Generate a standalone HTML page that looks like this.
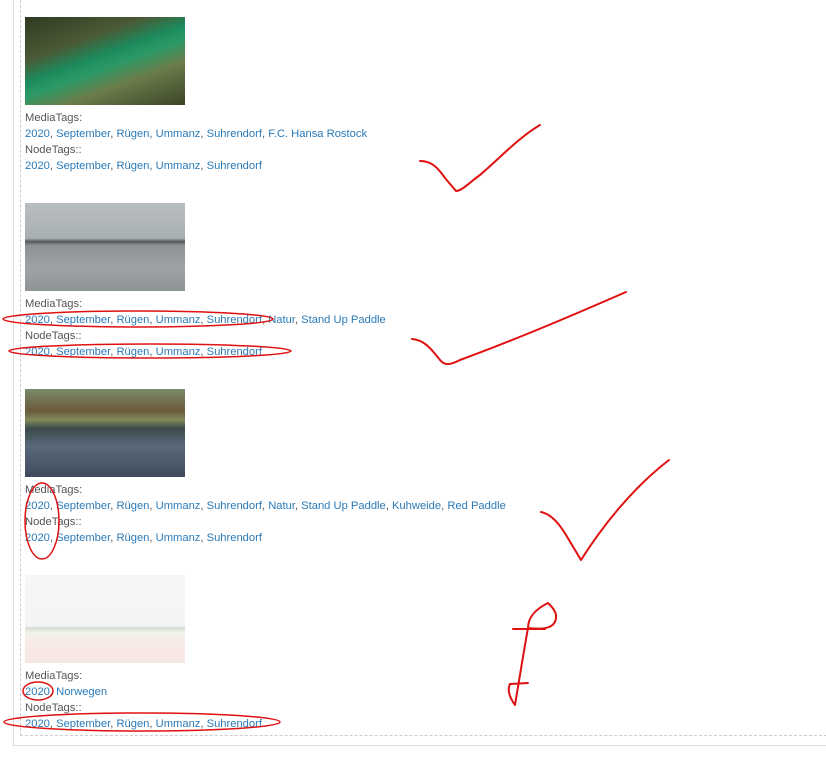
<!DOCTYPE html>
<html><head><meta charset="utf-8"><style>
body{margin:0;width:826px;height:768px;background:#fff;position:relative;overflow:hidden;font-family:"Liberation Sans","DejaVu Sans",sans-serif;font-size:11.2px;}
.outer{position:absolute;left:13px;top:0;width:813px;height:745px;border-left:1px solid #ddd;border-bottom:1px solid #ddd;}
.inner{position:absolute;left:20px;top:0;width:806px;height:735px;border-left:1px dashed #ccc;border-bottom:1px dashed #ccc;}
.blk{position:absolute;left:25px;width:600px;}
.img{width:160px;height:88px;}
.t{line-height:16px;color:#555;white-space:nowrap;}
.t a{color:#2a7ab8;text-decoration:none;}
.l1{margin-top:5px;}
svg{position:absolute;left:0;top:0;}
</style></head><body>
<div class="outer"></div><div class="inner"></div>

<div class="blk" style="top:17px">
<div class="img" style="background:linear-gradient(160deg,#2f3a22 0%,#4a5a36 30%,#1d8a5c 45%,#2c9a66 55%,#6b7c4a 70%,#3a4428 100%)"></div>
<div class="t l1">MediaTags:</div>
<div class="t"><a>2020</a>, <a>September</a>, <a>Rügen</a>, <a>Ummanz</a>, <a>Suhrendorf</a>, <a>F.C. Hansa Rostock</a></div>
<div class="t">NodeTags::</div>
<div class="t"><a>2020</a>, <a>September</a>, <a>Rügen</a>, <a>Ummanz</a>, <a>Suhrendorf</a></div>
</div>

<div class="blk" style="top:203px">
<div class="img" style="background:linear-gradient(180deg,#b8bdbf 0%,#a9b0b3 40%,#55585a 44%,#8c9295 48%,#9ea3a5 75%,#8e9395 100%)"></div>
<div class="t l1">MediaTags:</div>
<div class="t"><a>2020</a>, <a>September</a>, <a>Rügen</a>, <a>Ummanz</a>, <a>Suhrendorf</a>, <a>Natur</a>, <a>Stand Up Paddle</a></div>
<div class="t">NodeTags::</div>
<div class="t"><a>2020</a>, <a>September</a>, <a>Rügen</a>, <a>Ummanz</a>, <a>Suhrendorf</a></div>
</div>

<div class="blk" style="top:389px">
<div class="img" style="background:linear-gradient(180deg,#7a8a6a 0%,#6b5a3a 25%,#7f8a5a 35%,#3a4a4a 45%,#5a6a7a 65%,#3e4a5c 100%)"></div>
<div class="t l1">MediaTags:</div>
<div class="t"><a>2020</a>, <a>September</a>, <a>Rügen</a>, <a>Ummanz</a>, <a>Suhrendorf</a>, <a>Natur</a>, <a>Stand Up Paddle</a>, <a>Kuhweide</a>, <a>Red Paddle</a></div>
<div class="t">NodeTags::</div>
<div class="t"><a>2020</a>, <a>September</a>, <a>Rügen</a>, <a>Ummanz</a>, <a>Suhrendorf</a></div>
</div>

<div class="blk" style="top:575px">
<div class="img" style="background:linear-gradient(180deg,#f6f6f6 0%,#f4f4f4 58%,#d8dcd8 60%,#eef6ea 66%,#f8ece8 72%,#f6e6e2 100%)"></div>
<div class="t l1">MediaTags:</div>
<div class="t"><a>2020</a>, <a>Norwegen</a></div>
<div class="t">NodeTags::</div>
<div class="t"><a>2020</a>, <a>September</a>, <a>Rügen</a>, <a>Ummanz</a>, <a>Suhrendorf</a></div>
</div>

<svg width="826" height="768" fill="none" stroke="#e01010" stroke-width="2" stroke-linecap="round" stroke-linejoin="round">
<path d="M420 161 C432 161 438 168 445 178 L456 191 C462 191 470 182 480 175 C500 158 518 138 540 125"/>
<path d="M412 339 C425 340 432 350 440 360 C445 366 450 365 460 360 C520 338 580 312 626 292"/>
<path d="M541 512 C556 515 566 535 572 545 L581 560 C600 530 630 490 669 460"/>
<path d="M548 603 C534 610 528 618 528 628 C545 630 557 628 556 615 C555 609 550 605 548 603 M513 629 L545 629 M528 628 C524 650 520 675 515 705 C510 698 507 690 510 684 L528 683"/>
<ellipse cx="138" cy="319" rx="135" ry="8" stroke-width="1.5"/>
<ellipse cx="150" cy="351" rx="141" ry="7" stroke-width="1.5"/>
<ellipse cx="42" cy="521" rx="17" ry="38" stroke-width="1.5"/>
<ellipse cx="38" cy="691" rx="15" ry="9" stroke-width="1.5"/>
<ellipse cx="142" cy="722" rx="138" ry="9" stroke-width="1.5"/>
</svg>
</body></html>
